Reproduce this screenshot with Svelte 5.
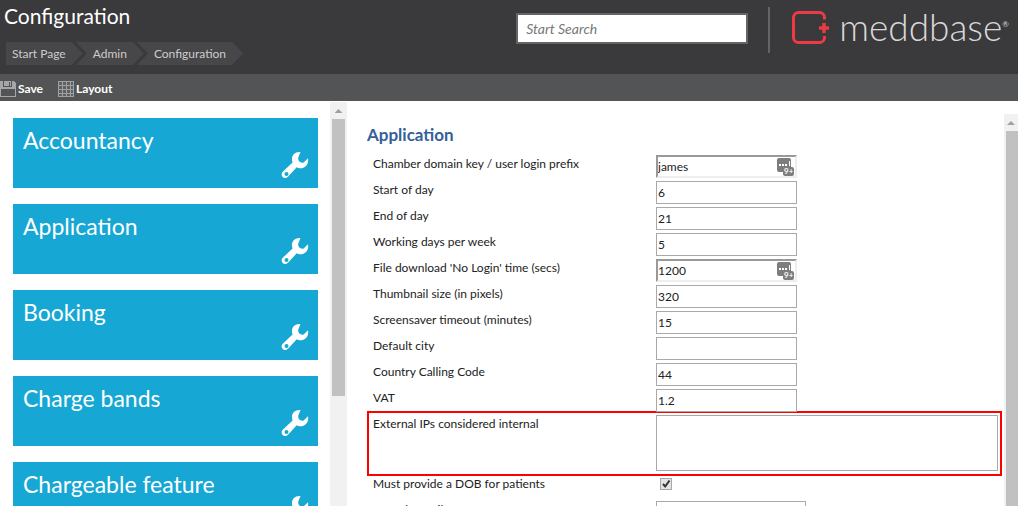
<script>
  const crumbs = ['Start Page', 'Admin', 'Configuration'];
  const sections = ['Accountancy', 'Application', 'Booking', 'Charge bands', 'Chargeable feature'];
  const fields = [
    { id: 'domain', label: 'Chamber domain key / user login prefix', value: 'james', managed: true },
    { id: 'start', label: 'Start of day', value: '6' },
    { id: 'end', label: 'End of day', value: '21' },
    { id: 'days', label: 'Working days per week', value: '5' },
    { id: 'download', label: "File download 'No Login' time (secs)", value: '1200', managed: true },
    { id: 'thumb', label: 'Thumbnail size (in pixels)', value: '320' },
    { id: 'saver', label: 'Screensaver timeout (minutes)', value: '15' },
    { id: 'city', label: 'Default city', value: '' },
    { id: 'calling', label: 'Country Calling Code', value: '44' },
    { id: 'vat', label: 'VAT', value: '1.2' },
    { id: 'ips', label: 'External IPs considered internal', type: 'area' },
    { id: 'dob', label: 'Must provide a DOB for patients', type: 'check' },
    { id: 'mail', label: 'Default email', value: '', wide: true }
  ];
</script>

<div class="page">
  <header>
    <div class="heading">
      <h1>Configuration</h1>
      <nav aria-label="Breadcrumb">
        {#each crumbs as crumb}<a href="#top">{crumb}</a>{/each}
      </nav>
    </div>
    <input class="search" type="search" placeholder="Start Search" aria-label="Start Search" />
    <div class="brand">
      <svg width="38" height="36" viewBox="0 0 38 36" aria-hidden="true">
        <path d="M32.500 9.500V7.500a5 5 0 0 0-5-5H6.500a5 5 0 0 0-5 5v20a5 5 0 0 0 5 5H27.500a5 5 0 0 0 5-5V26" fill="none" stroke="#ee3a43" stroke-width="3" />
        <path d="M32 13v10M27 18h10" stroke="#ee3a43" stroke-width="3.400" />
      </svg>
      <span class="name">meddbase</span><span class="reg">®</span>
    </div>
  </header>

  <div class="toolbar">
    <button type="button">
      <svg width="16" height="16" viewBox="0 0 16 16" aria-hidden="true">
        <path d="M0 0H14L16 2V16H0Z" fill="#a5a6a7" />
        <path d="M3 0H12V6H3Z" fill="#535456" /><path d="M4 0H11V5H4Z" fill="#a5a6a7" />
        <path d="M9 1h1v4H9Z" fill="#535456" /><path d="M1 8H15V15H1Z" fill="#535456" />
      </svg>Save
    </button>
    <button type="button">
      <svg width="16" height="16" viewBox="0 0 16 16" aria-hidden="true">
        <path d="M0 0H16V16H0Z" fill="#5f6062" />
        <path d="M.5 0V16M4.500 0V16M8.500 0V16M12.500 0V16M15.500 0V16M0 .5H16M0 4.500H16M0 8.500H16M0 12.500H16M0 15.500H16" stroke="#a0a1a2" />
      </svg>Layout
    </button>
  </div>

  <div class="body">
    <aside>
      {#each sections as section}
        <button type="button" class="card">
          <span>{section}</span>
          <svg width="28" height="28" viewBox="0 0 28 28" aria-hidden="true">
            <path fill="#fff" fill-rule="evenodd" d="M19.500 1C14 .5 10.500 4 11 9c.1 1 .3 1.800.6 2.600L2 20.500c-3.800 4 1.200 8.800 5 5.200l8.700-9.400c1 .6 2 .9 3.300.9 5.500.1 9-4.200 8-10l-4.300 4.200c-3 1-6.200-1-5.400-5Zm-14 20a2 2 0 1 1 0 4 2 2 0 0 1 0-4Z" />
          </svg>
        </button>
      {/each}
    </aside>
    <div class="scroll left" aria-hidden="true"><i></i><b></b></div>

    <main>
      <h2>Application</h2>
      <form>
        {#each fields as f}
          <div class="row" class:marked={f.type === 'area'}>
            <label for={f.id}>{f.label}</label>
            {#if f.type === 'area'}
              <textarea id={f.id}></textarea>
            {:else if f.type === 'check'}
              <input id={f.id} type="checkbox" checked />
            {:else}
              <div class="box" class:wide={f.wide}>
                <input id={f.id} type="text" value={f.value} class:inset={f.managed} />
                {#if f.managed}
                  <svg width="17" height="19" viewBox="0 0 17 19" aria-hidden="true">
                    <rect width="14" height="14" rx="2" fill="#7d7d7d" />
                    <path d="M2 6h2v2H2zM5 6h2v2H5zM8 6h2v2H8zM12 3h1V8h-1z" fill="#fff" />
                    <rect x="6" y="9" width="11" height="9" rx="2" fill="#7d7d7d" />
                    <text x="7" y="16" font-size="8" font-weight="700" fill="#fff">9+</text>
                  </svg>
                {/if}
              </div>
            {/if}
          </div>
        {/each}
      </form>
    </main>
    <div class="scroll right" aria-hidden="true"><i></i><b></b></div>
  </div>
</div>

<style>
  :global(body) { margin: 0; background: #fff; }
  .page {
    display: flex; flex-direction: column; height: 100vh; overflow: hidden;
    font: 12px/18px Lato, sans-serif; color: #222;
  }
  h1, h2 { margin: 0; }
  input, textarea, button { font: inherit; color: inherit; box-sizing: border-box; margin: 0; }

  header { display: flex; align-items: flex-start; height: 74px; flex: none; background: #3a393b; color: #fff; }
  .heading { flex: 1; padding-left: 4px; }
  h1 { font-size: 21px; line-height: 24px; font-weight: 400; padding: 4px 0 14px; }
  nav { display: flex; padding-left: 2px; }
  nav a {
    height: 23px; line-height: 24px; padding: 0 17px; margin-right: -7px;
    background: #474648; color: #ccc; text-decoration: none;
    clip-path: polygon(0 0, calc(100% - 11px) 0, 100% 50%, calc(100% - 11px) 100%, 0 100%, 11px 50%);
  }
  nav a:first-child {
    padding-left: 6px;
    clip-path: polygon(0 0, calc(100% - 11px) 0, 100% 50%, calc(100% - 11px) 100%, 0 100%);
  }
  .search {
    width: 232px; height: 31px; margin: 13px 20px 0 0; padding: 0 8px;
    border: 2px solid #646466; border-radius: 0; background: #fff; font-size: 14px; appearance: none;
  }
  .search::placeholder { color: #777; font-style: italic; opacity: 1; }
  .brand {
    display: flex; align-items: flex-start; height: 46px; margin-top: 7px; padding: 0 9px 0 22px;
    border-left: 2px solid #646466; color: #d8d8d8;
  }
  .brand svg { margin-top: 3px; }
  .name { font-size: 37px; line-height: 40px; font-weight: 300; padding-left: 9px; }
  .reg { font-size: 8px; line-height: 34px; }

  .toolbar { display: flex; gap: 15px; height: 27px; flex: none; background: #535456; }
  .toolbar button {
    display: flex; align-items: center; gap: 2px; padding: 2px 0 0; border: 0; background: none;
    color: #fff; font-weight: 700;
  }

  .body { display: flex; flex: 1; min-height: 0; }
  aside {
    display: flex; flex-direction: column; gap: 16px; width: 305px; flex: none;
    padding: 17px 12px 0 13px; overflow: hidden;
  }
  .card {
    display: flex; justify-content: space-between; align-items: flex-start; height: 70px; flex: none;
    padding: 6px 9px 0 10px; border: 0; background: #17a7d4; color: #fff;
    font-size: 23px; line-height: 32px; text-align: left;
  }
  .card svg { margin-top: 27px; }

  .scroll { display: flex; flex-direction: column; flex: none; background: #f1f1f1; }
  .scroll i {
    width: 8px; height: 4px; margin: 7px auto 6px; background: #a0a0a0;
    clip-path: polygon(50% 0, 100% 100%, 0 100%);
  }
  .scroll b { background: #c1c1c1; margin: 0 2px; }
  .left { width: 17px; margin-top: 1px; }
  .left b { height: 277px; }
  .right { width: 14px; margin-top: 13px; }
  .right b { flex: 1; margin-right: 0; }

  main { flex: 1; min-width: 0; padding: 24px 6px 0 20px; overflow: hidden; }
  h2 { font-size: 17px; line-height: 20px; color: #34609a; padding-bottom: 10px; }
  form { display: flex; flex-direction: column; gap: 3px; }
  .row { display: flex; align-items: flex-start; min-height: 23px; padding-left: 6px; }
  label { width: 283px; flex: none; }
  .box { position: relative; width: 141px; }
  .wide { width: 150px; }
  .box input {
    display: block; width: 100%; height: 23px; padding: 0 1px; border: 1px solid #a9a9a9; background: #fff;
  }
  .box .inset { border: 2px solid; border-color: #999 #eee #eee #999; padding: 0; }
  .box svg { position: absolute; right: 3px; top: 3px; }
  textarea { flex: 1; height: 56px; margin: 0 0 1px; border: 1px solid #a9a9a9; resize: none; }
  .marked { outline: 2px solid #f00; outline-offset: 2px; margin-left: 4px; padding-left: 2px; }
  input[type='checkbox'] {
    appearance: none; width: 12px; height: 12px; margin: 3px 4px 0; border: 1px solid #a8a8a8;
    background: #e4e4e4 url("data:image/svg+xml,%3Csvg xmlns='http://www.w3.org/2000/svg' viewBox='0 0 10 10'%3E%3Cpath d='M2 5l2.200 2.500L8.500 1.500' fill='none' stroke='%23333' stroke-width='2'/%3E%3C/svg%3E");
  }
</style>
